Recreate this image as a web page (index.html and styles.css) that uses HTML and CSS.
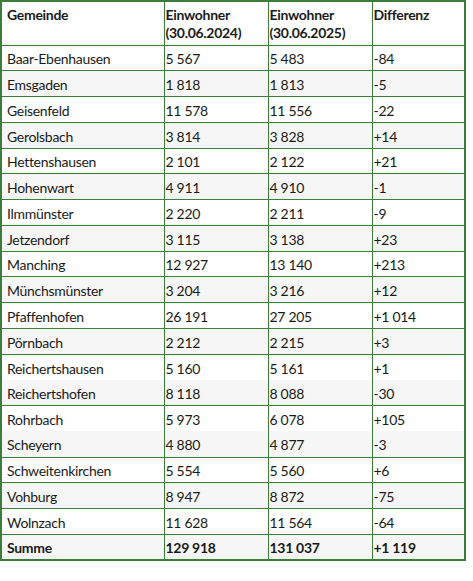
FILE: index.html
```html
<!DOCTYPE html>
<html lang="de">
<head>
<meta charset="utf-8">
<title>Einwohner</title>
<link rel="stylesheet" href="styles.css">
</head>
<body>
<table class="pop">
  <colgroup>
    <col class="c1"><col class="c2"><col class="c3"><col class="c4">
  </colgroup>
  <thead>
    <tr class="head">
      <th>Gemeinde</th>
      <th>Einwohner<br>(30.06.2024)</th>
      <th>Einwohner<br>(30.06.2025)</th>
      <th>Differenz</th>
    </tr>
  </thead>
  <tbody>
    <tr><td>Baar-Ebenhausen</td><td>5 567</td><td>5 483</td><td>-84</td></tr>
    <tr class="alt"><td>Emsgaden</td><td>1 818</td><td>1 813</td><td>-5</td></tr>
    <tr><td>Geisenfeld</td><td>11 578</td><td>11 556</td><td>-22</td></tr>
    <tr class="alt"><td>Gerolsbach</td><td>3 814</td><td>3 828</td><td>+14</td></tr>
    <tr><td>Hettenshausen</td><td>2 101</td><td>2 122</td><td>+21</td></tr>
    <tr class="alt"><td>Hohenwart</td><td>4 911</td><td>4 910</td><td>-1</td></tr>
    <tr><td>Ilmmünster</td><td>2 220</td><td>2 211</td><td>-9</td></tr>
    <tr class="alt"><td>Jetzendorf</td><td>3 115</td><td>3 138</td><td>+23</td></tr>
    <tr><td>Manching</td><td>12 927</td><td>13 140</td><td>+213</td></tr>
    <tr class="alt"><td>Münchsmünster</td><td>3 204</td><td>3 216</td><td>+12</td></tr>
    <tr><td>Pfaffenhofen</td><td>26 191</td><td>27 205</td><td>+1 014</td></tr>
    <tr class="alt"><td>Pörnbach</td><td>2 212</td><td>2 215</td><td>+3</td></tr>
    <tr class="nb"><td>Reichertshausen</td><td>5 160</td><td>5 161</td><td>+1</td></tr>
    <tr class="alt"><td>Reichertshofen</td><td>8 118</td><td>8 088</td><td>-30</td></tr>
    <tr class="nb"><td>Rohrbach</td><td>5 973</td><td>6 078</td><td>+105</td></tr>
    <tr class="alt"><td>Scheyern</td><td>4 880</td><td>4 877</td><td>-3</td></tr>
    <tr><td>Schweitenkirchen</td><td>5 554</td><td>5 560</td><td>+6</td></tr>
    <tr class="alt"><td>Vohburg</td><td>8 947</td><td>8 872</td><td>-75</td></tr>
    <tr><td>Wolnzach</td><td>11 628</td><td>11 564</td><td>-64</td></tr>
    <tr class="alt total"><td>Summe</td><td>129 918</td><td>131 037</td><td>+1 119</td></tr>
  </tbody>
</table>
</body>
</html>
```
FILE: styles.css
```css
html, body {
  margin: 0;
  padding: 0;
  background: #ffffff;
}

body {
  font-family: Lato, "Open Sans", "Liberation Sans", sans-serif;
  font-size: 14px;
  letter-spacing: -0.3px;
  color: #1a1a1a;
}

.pop {
  border-collapse: collapse;
  table-layout: fixed;
  width: 464px;
  border: 2px solid #3c7d3c;
}

.c1 { width: 163px; }
.c2 { width: 104px; }
.c3 { width: 104px; }
.c4 { width: 93px; }

.pop th,
.pop td {
  border: 1px solid #3c7d3c;
  padding: 0 0 0 1px;
  text-align: left;
  white-space: nowrap;
}

.pop th:first-child,
.pop td:first-child {
  padding-left: 5px;
}

.head th {
  height: 44px;
  vertical-align: top;
  padding-top: 4px;
  font-weight: 700;
  line-height: 18px;
  box-sizing: border-box;
}

.pop td {
  height: 25.75px;
  line-height: 18px;
  padding-top: 3px;
  padding-bottom: 0;
  vertical-align: middle;
  box-sizing: border-box;
}

.alt td {
  background: #f6f6f6;
}

.nb td {
  border-bottom-style: hidden;
}

.total td {
  font-weight: 700;
}
```
